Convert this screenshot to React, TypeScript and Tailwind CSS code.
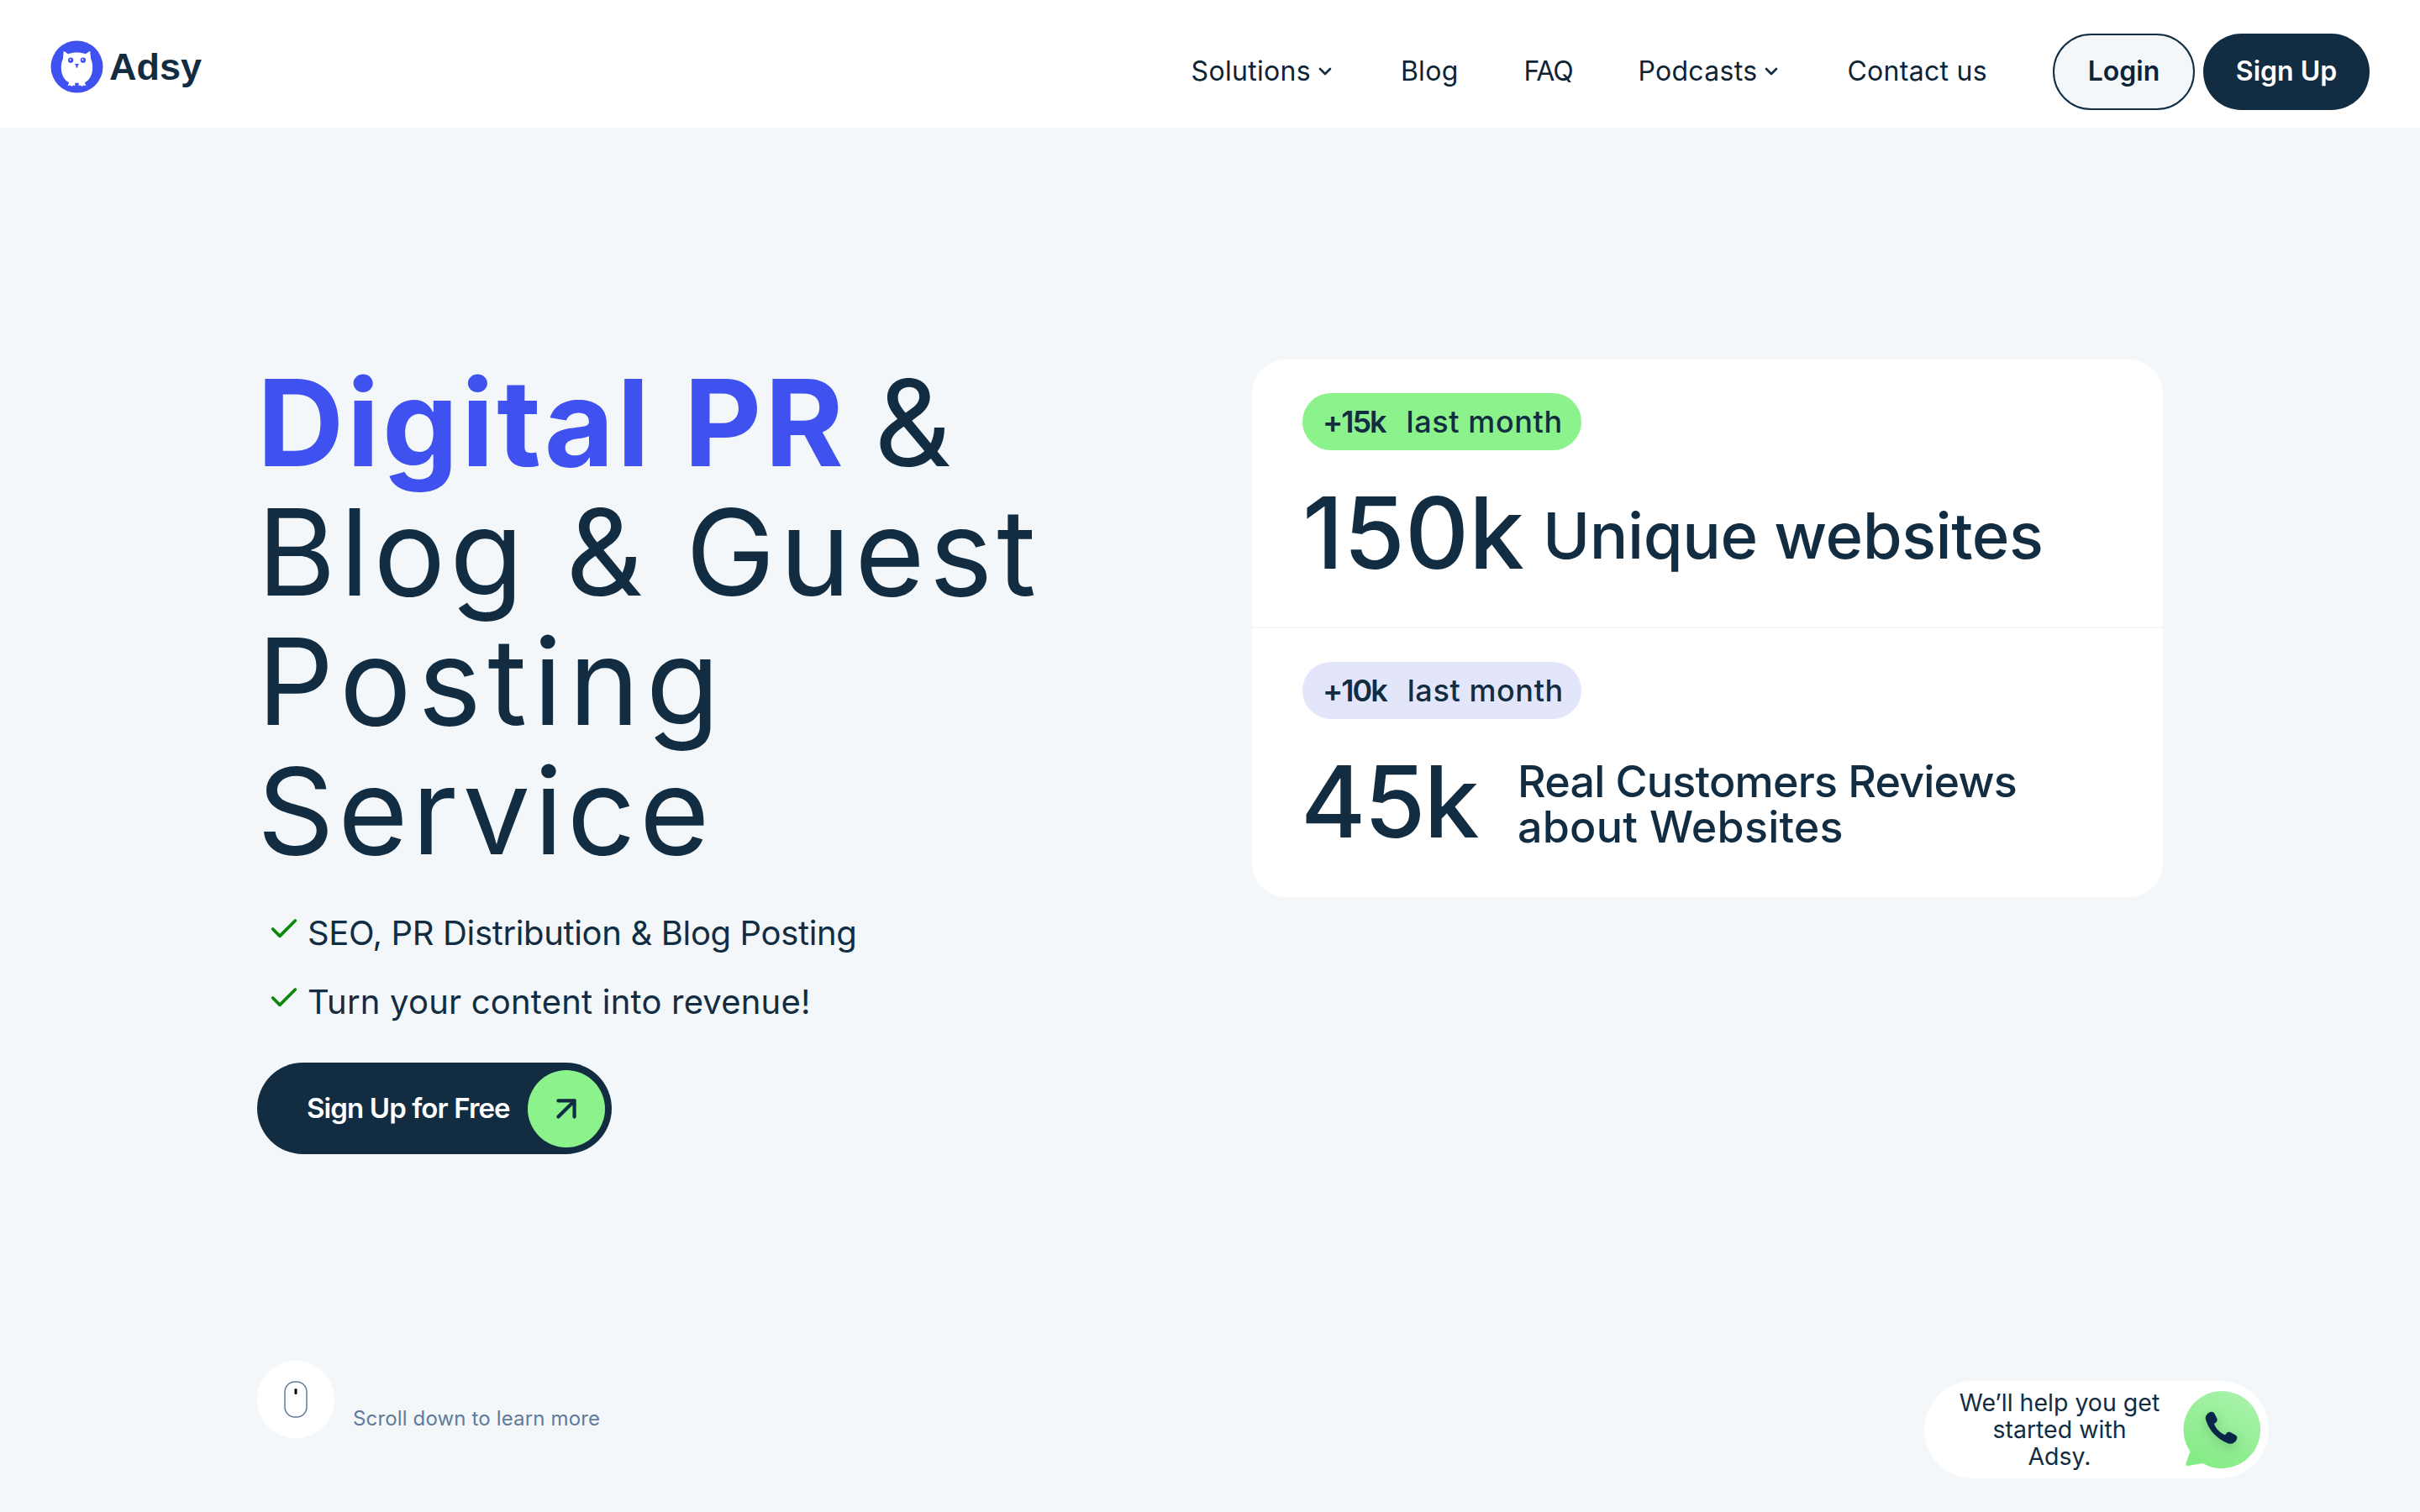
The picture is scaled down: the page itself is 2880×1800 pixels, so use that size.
import React from 'react';
import { ChevronDown, Check, ArrowUpRight } from 'lucide-react';

const dark = 'text-[#122d42]';

const Owl: React.FC = () => (
  <svg viewBox="0 0 64 64" className="w-[63px] h-[63px] shrink-0">
    <circle cx="32" cy="32" r="31.5" fill="#3f51ee" />
    <path
      d="M16 13l5.5 3.500c3-1.200 6.500-1.800 10.500-1.800s7.500.6 10.500 1.800L48 13l.8 9c1.400 2.500 2.200 7 2.200 11 0 9-4 15.500-9.500 18l1.500 4-3-.6-1.800 1.400-1.800-1.400-2.400.6.400-3.500h-4.800l.4 3.500-2.400-.6-1.800 1.400-1.800-1.400-3 .6 1.500-4C17 48.500 13 42 13 33c0-4 .8-8.500 2.200-11L16 13z"
      fill="#fff"
    />
    <circle cx="24.500" cy="24" r="3.200" fill="#3f51ee" />
    <circle cx="39.500" cy="24" r="3.200" fill="#3f51ee" />
    <circle cx="24" cy="23.500" r="1" fill="#fff" />
    <circle cx="39" cy="23.500" r="1" fill="#fff" />
    <path d="M29.500 28.500h5L33 31v2h-2v-2z" fill="#3f51ee" />
  </svg>
);

const NavLink: React.FC<{ label: string; menu?: boolean; className?: string }> = ({ label, menu, className = 'tracking-[0.3px]' }) => (
  <a className={`flex items-center gap-[5px] text-[32px] leading-none text-[#0d2436] ${className}`}>
    {label}
    {menu && <ChevronDown className="w-[24px] h-[24px] text-[#122d42]" strokeWidth={2.6} />}
  </a>
);

const Badge: React.FC<{ amount: string; green?: boolean }> = ({ amount, green }) => (
  <div className={`inline-flex items-center gap-[25px] h-[68px] w-[332px] px-[24px] rounded-full text-[36px] whitespace-nowrap ${dark} ${green ? 'bg-[#8cf28c]' : 'bg-[#e3e6fa]'}`}>
    <span className="font-semibold tracking-[-2px]">{amount}</span>
    <span className="font-medium tracking-[0.6px]">last month</span>
  </div>
);

export default function App() {
  return (
    <div className="relative min-h-screen bg-[#f3f7fa] overflow-hidden font-['Inter',sans-serif]">
      <header className="h-[152px] bg-white flex items-center justify-between pl-[60px] pr-[60px]">
        <div className="flex items-center gap-[7px] mt-[6px]">
          <Owl />
          <span className={`font-['Liberation_Sans',sans-serif] font-bold text-[45px] leading-none ${dark}`}>Adsy</span>
        </div>
        <nav className="flex items-center mt-[18px]">
          <div className="flex items-center gap-[78px] mr-[78px]">
            <NavLink label="Solutions" menu />
            <NavLink label="Blog" />
            <NavLink label="FAQ" className="tracking-[-1.2px]" />
            <NavLink label="Podcasts" menu />
            <NavLink label="Contact us" />
          </div>
          <button className="h-[91px] w-[169px] rounded-full border-2 border-[#122d42] bg-[#f3f7fa] text-[32px] font-semibold text-[#0d2436] mr-[10px]">Login</button>
          <button className="h-[91px] w-[198px] rounded-full bg-[#122d42] text-[32px] font-semibold text-white">Sign Up</button>
        </nav>
      </header>

      <main className="flex items-start pl-[306px] pt-[276px]">
        <div className="w-[1184px] shrink-0">
          <h1 className={`text-[143px] leading-[154px] tracking-[4.5px] font-normal ${dark} -mt-[2px]`}>
            <span className="font-bold text-[#3f51ee] tracking-[3.5px]">Digital PR</span> <span className="-ml-[12px]">&amp;</span><br />
            <span className="tracking-[5.1px]">Blog &amp; Guest</span><br />
            <span className="tracking-[7.5px]">Posting</span><br />
            Service
          </h1>
          <ul className={`mt-[28px] text-[40px] leading-[82px] ${dark}`}>
            <li className="flex items-center gap-[8px] pl-[12px] tracking-[-0.35px]">
              <Check className="w-[40px] h-[40px] text-[#0a860a] -mt-[10px]" strokeWidth={2.2} />
              SEO, PR Distribution &amp; Blog Posting
            </li>
            <li className="flex items-center gap-[8px] pl-[12px] tracking-[0.2px]">
              <Check className="w-[40px] h-[40px] text-[#0a860a] -mt-[10px]" strokeWidth={2.2} />
              Turn your content into revenue!
            </li>
          </ul>
          <button className="mt-[31px] flex items-center h-[109px] w-[422px] pl-[59px] pr-[8px] justify-between rounded-full bg-[#122d42] text-white text-[33px] font-semibold tracking-[-0.9px]">
            Sign Up for Free
            <span className="flex items-center justify-center w-[92px] h-[92px] rounded-full bg-[#8cf28c]">
              <ArrowUpRight className="w-[46px] h-[46px] text-[#122d42]" strokeWidth={2.2} />
            </span>
          </button>
        </div>

        <section className="w-[1084px] h-[640px] bg-white rounded-[40px] flex flex-col shrink-0">
          <div className="h-[320px] border-b-2 border-[#f3f7fa] pt-[40px] pl-[60px]">
            <Badge amount="+15k" green />
            <div className={`flex items-center mt-[38px] ${dark}`}>
              <span className="text-[118px] leading-[120px] font-medium tracking-[0px]">150k</span>
              <span className="ml-[22px] text-[76px] leading-none font-medium tracking-[-0.5px] mt-[6px]">Unique websites</span>
            </div>
          </div>
          <div className="pt-[40px] pl-[60px]">
            <Badge amount="+10k" />
            <div className={`flex items-center mt-[38px] ${dark}`}>
              <span className="w-[256px] text-[118px] leading-[120px] font-medium tracking-[-2px] -ml-[2px] mr-[2px]">45k</span>
              <span className="text-[52px] leading-[54px] font-medium mt-[7px]">
                <span className="tracking-[-0.8px]">Real Customers Reviews</span><br />
                <span className="tracking-[0.2px]">about Websites</span>
              </span>
            </div>
          </div>
        </section>
      </main>

      <div className="absolute left-[306px] top-[1620px] flex items-end gap-[22px]">
        <span className="flex items-center justify-center w-[92px] h-[92px] rounded-full bg-white">
          <svg viewBox="0 0 28 44" className="w-[28px] h-[44px]">
            <rect x="1" y="1" width="26" height="42" rx="12" fill="none" stroke="#5f7b9c" strokeWidth="1.500" />
            <rect x="12.500" y="9" width="3" height="7" rx="1.500" fill="#000" />
          </svg>
        </span>
        <span className="text-[24px] leading-none text-[#5f7b9c] pb-[11px] tracking-[0.15px]">Scroll down to learn more</span>
      </div>

      <div className="absolute left-[2290px] top-[1644px] flex items-center w-[410px] h-[116px] rounded-full bg-white">
        <p className={`w-[250px] ml-[36px] text-center text-[28.5px] leading-[32px] ${dark}`}>
          We’ll help you get<br />started with<br />Adsy.
        </p>
        <svg viewBox="0 0 92 92" className="w-[92px] h-[92px] ml-[22px]">
          <defs>
            <linearGradient id="bubble" x1="0.8" y1="0" x2="0.3" y2="1">
              <stop offset="0" stopColor="#aaf2ac" />
              <stop offset="1" stopColor="#84ec84" />
            </linearGradient>
          </defs>
          <path d="M46 0a46 46 0 1 1-22.500 86.100L6 89c-2 .4-3.300-1-2.700-2.800L8.600 72A46 46 0 0 1 46 0z" fill="url(#bubble)" />
          <g transform="translate(46 46) scale(1.100) translate(-45 -40)" className="drop-shadow-[0_4px_6px_rgba(20,90,40,0.25)]">
            <path
              d="M28 30c-1.500-4 1-7.500 4.500-9 2-.8 3.800 0 4.800 1.800l2.500 5c.8 1.800.3 3.300-1.200 4.500l-1.800 1.400c1.500 5 6.500 10 11.800 12l1.700-1.800c1.200-1.300 2.800-1.700 4.400-.9l5 2.600c1.800 1 2.500 2.800 1.600 4.800-1.600 3.500-5 5.800-9 4.500C40 50 32 42 28 30z"
              fill="#08264a"
            />
          </g>
        </svg>
      </div>
    </div>
  );
}
